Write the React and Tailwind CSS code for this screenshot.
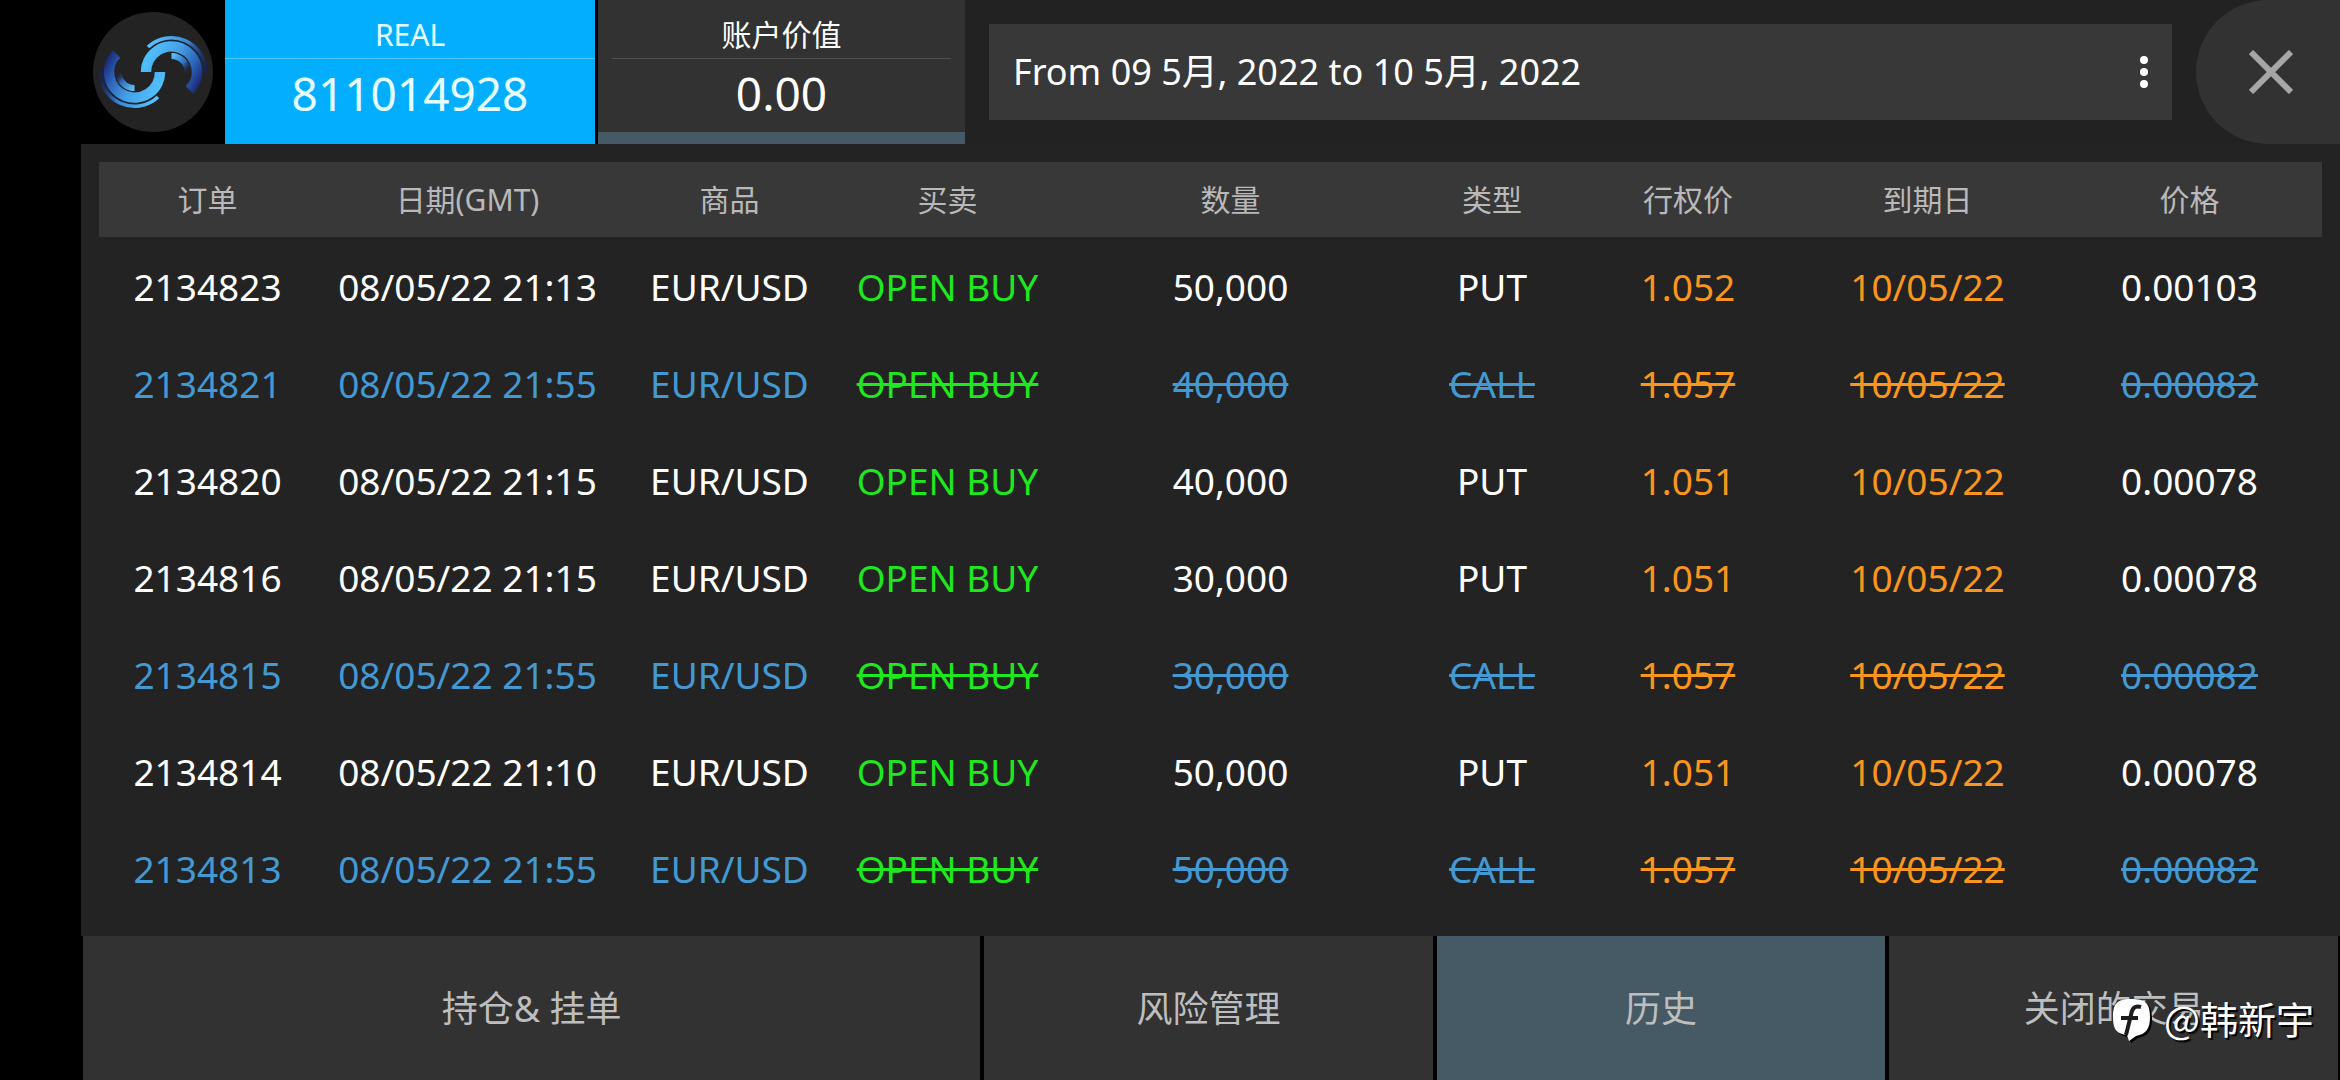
import clsx from 'clsx';

const columns = [
    { key: 'order', label: '订单', width: 'w-[217px]' },
    { key: 'date', label: '日期(GMT)', width: 'w-[303px]' },
    { key: 'symbol', label: '商品', width: 'w-[221px]' },
    { key: 'side', label: '买卖', width: 'w-[215px]' },
    { key: 'amount', label: '数量', width: 'w-[351px]' },
    { key: 'type', label: '类型', width: 'w-[172px]' },
    { key: 'strike', label: '行权价', width: 'w-[220px]' },
    { key: 'expiry', label: '到期日', width: 'w-[259px]' },
    { key: 'price', label: '价格', width: 'w-[265px]' }
];

const orders = [
    { order: '2134823', date: '08/05/22 21:13', amount: '50,000', type: 'PUT', strike: '1.052', price: '0.00103' },
    { order: '2134821', date: '08/05/22 21:55', amount: '40,000', type: 'CALL', strike: '1.057', price: '0.00082', closed: true },
    { order: '2134820', date: '08/05/22 21:15', amount: '40,000', type: 'PUT', strike: '1.051', price: '0.00078' },
    { order: '2134816', date: '08/05/22 21:15', amount: '30,000', type: 'PUT', strike: '1.051', price: '0.00078' },
    { order: '2134815', date: '08/05/22 21:55', amount: '30,000', type: 'CALL', strike: '1.057', price: '0.00082', closed: true },
    { order: '2134814', date: '08/05/22 21:10', amount: '50,000', type: 'PUT', strike: '1.051', price: '0.00078' },
    { order: '2134813', date: '08/05/22 21:55', amount: '50,000', type: 'CALL', strike: '1.057', price: '0.00082', closed: true }
];

const tabs = ['持仓& 挂单', '风险管理', '历史', '关闭的交易'];

const Logo = () => (
    <svg viewBox="0 0 120 120" className="h-[120px] w-[120px]" fill="none" aria-hidden="true">
        <defs>
            <linearGradient id="swirl" gradientUnits="userSpaceOnUse" x1="54" y1="48" x2="106" y2="76">
                <stop offset="0" stopColor="#50bdfb" />
                <stop offset="0.4" stopColor="#469fe8" />
                <stop offset="0.75" stopColor="#2a5fb4" />
                <stop offset="1" stopColor="#1a2470" />
            </linearGradient>
            <linearGradient id="rim" gradientUnits="userSpaceOnUse" x1="56" y1="34" x2="114" y2="60">
                <stop offset="0" stopColor="#5cc4fb" />
                <stop offset="0.55" stopColor="#3a83d0" />
                <stop offset="1" stopColor="#1a2470" stopOpacity="0" />
            </linearGradient>
            <linearGradient id="inner" gradientUnits="userSpaceOnUse" x1="78" y1="44" x2="95" y2="60">
                <stop offset="0" stopColor="#5cc4fb" />
                <stop offset="0.6" stopColor="#2f6cbc" />
                <stop offset="1" stopColor="#1a2470" stopOpacity="0" />
            </linearGradient>
            <g id="arm">
                <path d="M55 35 A34 34 0 0 1 112 62" stroke="#10265c" strokeWidth="5" strokeOpacity="0.5" />
                <path d="M53 60 A25.5 25.5 0 1 1 96.5 78" stroke="url(#swirl)" strokeWidth="10.5" />
                <path d="M55 35 A34.5 34.5 0 0 1 113 60" stroke="url(#rim)" strokeWidth="3.5" />
                <path d="M78.5 44 A16 16 0 0 1 94.5 60" stroke="url(#inner)" strokeWidth="6" />
            </g>
        </defs>
        <circle cx="60" cy="60" r="60" fill="#232323" />
        <use href="#arm" />
        <use href="#arm" transform="rotate(180 60 60)" />
    </svg>
);

const cellColor = (key, closed) => {
    if (key === 'side') return 'text-[#1fe81f]';
    if (key === 'strike' || key === 'expiry') return 'text-[#fa961e]';
    return closed ? 'text-[#4499d2]' : 'text-white';
};

const OrderRow = ({ order }) => {
    const row = { symbol: 'EUR/USD', side: 'OPEN BUY', expiry: '10/05/22', ...order };

    return (
        <tr className="h-[97px]">
            {columns.map(({ key }, index) => (
                <td
                    key={key}
                    className={clsx(
                        'px-0 pt-0.5 pb-0 text-center whitespace-nowrap',
                        cellColor(key, row.closed),
                        row.closed && index > 2 && 'line-through decoration-3'
                    )}
                >
                    {row[key]}
                </td>
            ))}
        </tr>
    );
};

const Header = () => (
    <header className="flex h-36">
        <div className="flex w-36 shrink-0 items-center justify-center">
            <Logo />
        </div>

        <div className="w-[370px] shrink-0 bg-[#03aeff] text-center text-[#e6ffff]">
            <div className="flex h-[59px] items-end justify-center border-b border-[#4cc8ff] pb-[3px] text-[30px] leading-10">REAL</div>
            <div className="pt-1.5 text-[46px] leading-14">811014928</div>
        </div>

        <div className="ml-[3px] w-[367px] shrink-0 border-b-12 border-[#465a65] bg-[#323232] text-center text-white">
            <div className="mx-3.5 flex h-[59px] items-end justify-center border-b border-[#505050] pb-[3px] text-[30px] leading-10">账户价值</div>
            <div className="pt-1.5 text-[46px] leading-14">0.00</div>
        </div>

        <div className="flex flex-1 gap-6 bg-[#222222] pl-6">
            <div className="my-6 flex flex-1 items-center justify-between bg-[#383838] pl-6 text-[36px] text-white">
                <span>From 09 5月, 2022 to 10 5月, 2022</span>
                <button type="button" aria-label="More" className="flex h-full w-14 items-center justify-center">
                    <svg viewBox="0 0 8 32" className="h-8 w-2" fill="currentColor">
                        <circle cx="4" cy="4" r="4" />
                        <circle cx="4" cy="16" r="4" />
                        <circle cx="4" cy="28" r="4" />
                    </svg>
                </button>
            </div>
            <button type="button" aria-label="Close" className="flex w-36 items-center justify-center rounded-l-full bg-[#323232] pl-1.5">
                <svg viewBox="0 0 44 44" className="h-11 w-11" stroke="#a6a6a6" strokeWidth="6">
                    <path d="M2 2 L42 42 M42 2 L2 42" />
                </svg>
            </button>
        </div>
    </header>
);

const Watermark = () => (
    <div className="absolute right-[26px] bottom-[34px] flex items-center gap-3 font-['Noto_Sans_CJK_SC',sans-serif] text-[38px] leading-14 text-white [text-shadow:2px_2px_1px_#000]">
        <svg viewBox="0 0 40 46" className="mt-1 h-[46px] w-10" aria-hidden="true">
            <path d="M19 2 C33 2 38 6 38 20 C38 32 34 37 24 39 L17 44 L15 38 C5 37 1 33 1 20 C1 7 5 2 19 2 Z" fill="#000" transform="translate(2 2)" />
            <path d="M19 2 C33 2 38 6 38 20 C38 32 34 37 24 39 L17 44 L15 38 C5 37 1 33 1 20 C1 7 5 2 19 2 Z" fill="#fff" />
            <path d="M29 10 C22 8 20 12 19 18 L14 38 M9 21 H26" fill="none" stroke="#1c1c1c" strokeWidth="4" />
        </svg>
        <span>@韩新宇</span>
    </div>
);

const App = () => {
    const activeTab = '历史';

    return (
        <div className="relative flex min-h-screen flex-col bg-black pl-[81px] font-['Noto_Sans','Noto_Sans_CJK_SC',sans-serif]">
            <Header />

            <main className="flex-1 bg-[#232323] p-[18px] pb-0">
                <table className="w-full table-fixed border-collapse text-[37px] leading-12">
                    <thead>
                        <tr className="h-[75px] bg-[#383838] text-[30px] text-[#b9b9b9]">
                            {columns.map(({ key, label, width }) => (
                                <th key={key} scope="col" className={clsx('p-0 text-center font-normal', width)}>{label}</th>
                            ))}
                        </tr>
                    </thead>
                    <tbody>
                        {orders.map((order) => (
                            <OrderRow key={order.order} order={order} />
                        ))}
                    </tbody>
                </table>
            </main>

            <nav className="grid h-36 grid-cols-[2fr_1fr_1fr_1fr] gap-1 px-0.5">
                {tabs.map((tab) => (
                    <button
                        key={tab}
                        type="button"
                        className={clsx('pt-0.5 text-[36px] text-[#bebebe]', tab === activeTab ? 'bg-[#465a65]' : 'bg-[#323232]')}
                    >
                        {tab}
                    </button>
                ))}
            </nav>

            <Watermark />
        </div>
    );
};

export default App;
